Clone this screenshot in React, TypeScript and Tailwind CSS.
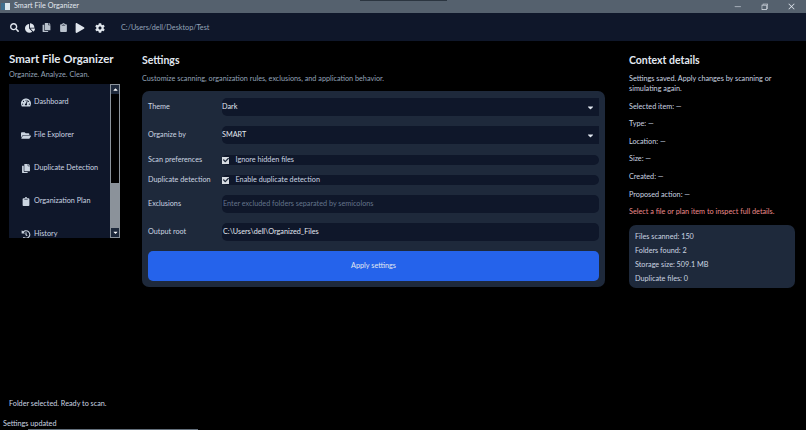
import { FaSearch, FaChartPie, FaCopy, FaClipboard, FaPlay, FaCog, FaTachometerAlt, FaFolderOpen, FaHistory, FaCheck, FaCaretDown, FaCaretUp } from "react-icons/fa"
import { VscChromeClose, VscChromeMinimize, VscChromeRestore } from "react-icons/vsc"
import type { IconType } from "react-icons"

const navItems: { icon: IconType; label: string }[] = [
  { icon: FaTachometerAlt, label: "Dashboard" },
  { icon: FaFolderOpen, label: "File Explorer" },
  { icon: FaCopy, label: "Duplicate Detection" },
  { icon: FaClipboard, label: "Organization Plan" },
  { icon: FaHistory, label: "History" },
]

const contextRows = ["Selected item: —", "Type: —", "Location: —", "Size: —", "Created: —", "Proposed action: —"]
const stats = ["Files scanned: 150", "Folders found: 2", "Storage size: 509.1 MB", "Duplicate files: 0"]

function Label({ children }: { children: string }) {
  return <div className="w-[74px] shrink-0 whitespace-nowrap text-[7.25px] leading-[10px] text-[#cbd5e1]">{children}</div>
}

function Select({ value }: { value: string }) {
  return (
    <div className="flex h-[18px] flex-1 items-center justify-between rounded-l-[5px] bg-[#0f172a] pr-1 pt-px text-[7.25px] text-[#e2e8f0]">
      {value}
      <FaCaretDown className="text-[9px] text-[#e2e8f0]" />
    </div>
  )
}

function Check({ label }: { label: string }) {
  return (
    <div className="flex h-[10px] flex-1 items-center rounded-[5px] bg-[#0f172a] text-[7.25px] text-[#cbd5e1]">
      <div className="mr-[6.5px] flex h-[7px] w-[7px] items-center justify-center bg-[#d8dde3]">
        <FaCheck className="text-[6px] text-[#1e293b]" />
      </div>
      {label}
    </div>
  )
}

function Field({ value, muted }: { value: string; muted?: boolean }) {
  return (
    <div className={`flex h-[18px] flex-1 items-center rounded-[5px] bg-[#0f172a] pl-px pt-px text-[7.25px] ${muted ? "text-[#64748b]" : "text-[#e2e8f0]"}`}>
      {value}
    </div>
  )
}

export default function App() {
  return (
    <div className="relative flex h-[430px] w-[806px] flex-col overflow-hidden bg-black font-['Lato',sans-serif] text-[#cbd5e1] antialiased">
      {/* title bar */}
      <div className="relative flex h-[13px] shrink-0 items-center bg-[#55616e] pl-[1px] text-[7.25px] text-[#e2e8f0]">
        <div className="absolute left-[360px] top-0 h-px w-[87px] bg-[#2b3540]" />
        <div className="flex h-[7px] w-[9px] bg-[#dbe7ee]">
          <div className="h-full w-[4px] bg-[#3f6f8f]" />
        </div>
        <span className="ml-[4px]">Smart File Organizer</span>
        <div className="ml-auto flex items-center text-[9px] text-[#e2e8f0]">
          <VscChromeMinimize className="mr-[18px]" />
          <VscChromeRestore className="mr-[18px]" />
          <VscChromeClose className="mr-[10px]" />
        </div>
      </div>

      {/* toolbar */}
      <div className="flex h-[28px] shrink-0 items-center bg-[#0f172a] pl-[10px] pt-px text-white">
        <FaSearch className="text-[9px] text-[#dfe5ec]" />
        <FaChartPie className="ml-[6px] text-[10px] text-[#dfe5ec]" />
        <FaCopy className="ml-[7px] text-[9px] text-[#b9c2cc]" />
        <FaClipboard className="ml-[8px] text-[9px] text-[#b9c2cc]" />
        <FaPlay className="ml-[7px] text-[10px] text-[#dfe5ec]" />
        <FaCog className="ml-[10px] text-[10px] text-[#dfe5ec]" />
        <span className="ml-[16px] pt-px text-[7.25px] text-[#94a3b8]">C:/Users/dell/Desktop/Test</span>
      </div>

      {/* body */}
      <div className="flex flex-1">
        {/* sidebar */}
        <div className="flex w-[142px] shrink-0 flex-col pl-[9px]">
          <div className="mt-[10px] text-[11.5px] font-bold leading-[15px] text-[#e2e8f0]">Smart File Organizer</div>
          <div className="mt-[3px] text-[7.25px] leading-[11px] text-[#94a3b8]">Organize. Analyze. Clean.</div>
          <div className="mt-[4px] flex h-[154px] w-[111px] bg-[#0f172a]">
            <div className="flex-1 overflow-hidden pl-[12px] pt-[13px]">
              {navItems.map((item) => (
                <div key={item.label} className="mb-[23px] flex h-[10px] items-center text-[7.25px] text-[#cbd5e1]">
                  <item.icon className="mr-[3px] w-[10px] text-[9px] text-[#cbd5e1]" />
                  {item.label}
                </div>
              ))}
            </div>
            <div className="flex w-[10px] flex-col items-center border border-[#8b939b] bg-black">
              <div className="flex h-[9px] w-full items-center justify-center bg-[#1e293b]">
                <FaCaretUp className="text-[7px] text-white" />
              </div>
              <div className="flex-1" />
              <div className="h-[45px] w-full bg-[#8b929a]" />
              <div className="flex h-[9px] w-full items-center justify-center bg-[#1e293b]">
                <FaCaretDown className="text-[7px] text-white" />
              </div>
            </div>
          </div>
          <div className="mt-auto text-[7.25px] leading-[11px] text-[#cbd5e1]">Folder selected. Ready to scan.</div>
          <div className="h-[9px] shrink-0" />
        </div>

        {/* settings */}
        <div className="flex w-[463px] shrink-0 flex-col">
          <div className="mt-[12px] text-[10.5px] font-bold leading-[14px] text-[#e2e8f0]">Settings</div>
          <div className="mt-[6px] text-[7.25px] leading-[11px] text-[#94a3b8]">Customize scanning, organization rules, exclusions, and application behavior.</div>
          <div className="mt-[7px] flex h-[196px] flex-col rounded-[7px] bg-[#1e293b] px-[6px] pt-[7px]">
            <div className="flex items-center">
              <Label>Theme</Label>
              <Select value="Dark" />
            </div>
            <div className="mt-[10px] flex items-center">
              <Label>Organize by</Label>
              <Select value="SMART" />
            </div>
            <div className="mt-[11px] flex items-center">
              <Label>Scan preferences</Label>
              <Check label="Ignore hidden files" />
            </div>
            <div className="mt-[10px] flex items-center">
              <Label>Duplicate detection</Label>
              <Check label="Enable duplicate detection" />
            </div>
            <div className="mt-[10px] flex items-center">
              <Label>Exclusions</Label>
              <Field value="Enter excluded folders separated by semicolons" muted />
            </div>
            <div className="mt-[10px] flex items-center">
              <Label>Output root</Label>
              <Field value="C:\Users\dell\Organized_Files" />
            </div>
            <div className="mt-[10px] flex h-[30px] items-center justify-center rounded-[5px] bg-[#2563eb] text-[7.25px] text-[#e2e8f0]">
              Apply settings
            </div>
          </div>
        </div>

        {/* context panel */}
        <div className="ml-[24px] flex w-[166px] shrink-0 flex-col">
          <div className="mt-[12px] text-[10.5px] font-bold leading-[14px] text-[#e2e8f0]">Context details</div>
          <div className="mt-[7px] text-[7.25px] leading-[10px] text-[#cbd5e1]">
            Settings saved. Apply changes by scanning or simulating again.
          </div>
          {contextRows.map((row) => (
            <div key={row} className="mt-[7.6px] text-[7.25px] leading-[10px] text-[#cbd5e1]">{row}</div>
          ))}
          <div className="mt-[7.6px] whitespace-nowrap text-[7.25px] leading-[10px] text-[#ec8a8a]">Select a file or plan item to inspect full details.</div>
          <div className="mt-[7.4px] flex h-[63px] flex-col justify-center gap-[4px] rounded-[7px] bg-[#1e293b] pl-[6px] pt-[3px]">
            {stats.map((s) => (
              <div key={s} className="text-[7.25px] leading-[10px] text-[#cbd5e1]">{s}</div>
            ))}
          </div>
        </div>
      </div>

      {/* status bar */}
      <div className="flex h-[12px] shrink-0 items-center pl-[3px] text-[7.25px] text-[#cbd5e1]">Settings updated</div>
      <div className="absolute bottom-0 left-[28px] h-px w-[170px] bg-[#64707c]" />
    </div>
  )
}
